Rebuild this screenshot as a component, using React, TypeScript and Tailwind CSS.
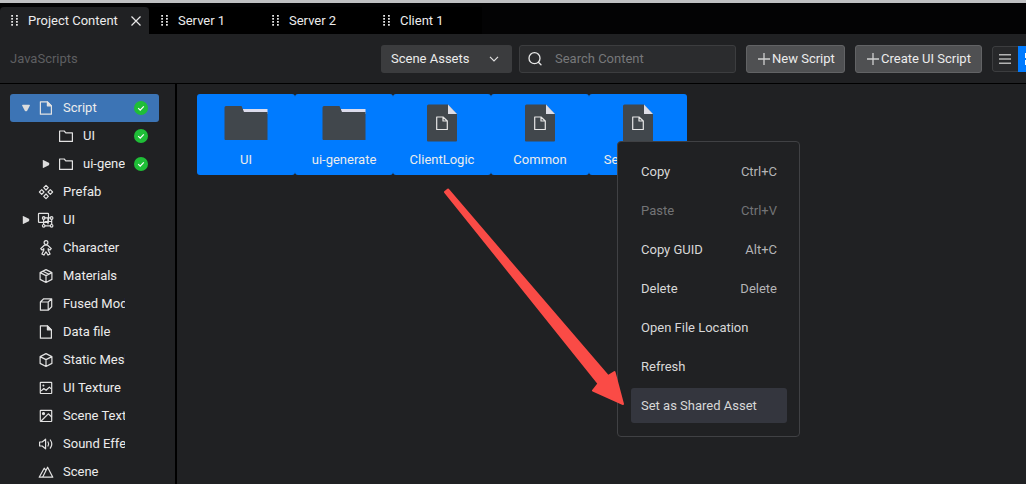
import type { ReactNode } from "react";

function Grip() {
  return (
    <svg width="8" height="11" viewBox="0 0 8 11" fill="#e8e8e8" className="shrink-0" aria-hidden="true">
      {[0, 3, 6, 9].map((y) => (
        <g key={y}>
          <rect x="0.2" y={y} width="1.8" height="1.7" />
          <rect x="5" y={y} width="1.8" height="1.7" />
        </g>
      ))}
    </svg>
  );
}

function Stroke({ children, size = 14 }: { children: ReactNode; size?: number }) {
  return (
    <svg
      width={size}
      height={size}
      viewBox="0 0 14 14"
      fill="none"
      stroke="currentColor"
      strokeWidth="1.2"
      strokeLinejoin="round"
      strokeLinecap="round"
      className="shrink-0 overflow-visible"
      aria-hidden="true"
    >
      {children}
    </svg>
  );
}

const icons = {
  file: (
    <Stroke>
      <path d="M1.4.8h7l4 4v8.4h-11z" />
      <path d="M8.4.8v4h4z" fill="currentColor" />
    </Stroke>
  ),
  folder: (
    <Stroke>
      <path d="M.6 2h4.6l1.6 1.8h6.6v8.6H.6z" />
    </Stroke>
  ),
  prefab: (
    <Stroke>
      <path d="M7 .4 9.3 2.7 7 5 4.7 2.7zM7 9l2.3 2.3L7 13.6l-2.3-2.3zM2.7 4.7 5 7 2.7 9.3.4 7zM11.3 4.7 13.6 7l-2.3 2.3L9 7z" />
    </Stroke>
  ),
  ui: (
    <Stroke>
      <rect x="-.5" y=".3" width="10" height="9" rx=".6" />
      <path d="M5 4.8h6.8M4.6 6.5v5M12.7 6.5v5M6.2 12.8H11M9 4.8v6M6.2 8.5h6" />
      <circle cx="4.7" cy="5" r="1.3" />
      <circle cx="12.6" cy="5" r="1.3" />
      <circle cx="4.7" cy="12.8" r="1.3" />
      <circle cx="12.6" cy="12.8" r="1.3" />
    </Stroke>
  ),
  character: (
    <Stroke>
      <circle cx="7" cy="1.6" r="1.9" />
      <path d="M5.3 4.2h3.4l3.6 3.5-1.4 1.4-1.7-1.4v1.5l1.9 3.7-2 1.2L7 10.8l-2.1 3.3-2-1.2 1.9-3.7V7.7L3.1 9.1 1.7 7.7z" />
    </Stroke>
  ),
  cube: (
    <Stroke>
      <path d="M7 .6 12.9 3.6v6.8L7 13.5 1.1 10.4V3.6zM1.1 3.6 7 6.6l5.9-3M7 6.6v6.9M3.9 2.2l6 3" />
    </Stroke>
  ),
  fused: (
    <Stroke>
      <path d="M1.4 5h7.8v8.2H1.4zM1.4 5l3.3-3.2h8L9.2 5M12.7 1.8v8l-3.5 3.4" />
    </Stroke>
  ),
  mesh: (
    <Stroke>
      <path d="M7 .6 12.9 3.6v6.8L7 13.5 1.1 10.4V3.6zM1.1 3.6 7 6.6l5.9-3M7 6.6v6.9" />
    </Stroke>
  ),
  texture: (
    <Stroke>
      <rect x="1.3" y="1.3" width="11.4" height="11.2" rx=".5" />
      <path d="m2.5 9.6 2.3-2.1 2.3 1.8 3.3-3.2 1.2 1.2" />
      <circle cx="4.4" cy="4.4" r=".4" fill="currentColor" />
    </Stroke>
  ),
  sceneTexture: (
    <Stroke>
      <rect x="1.3" y="1.3" width="11.4" height="11.2" rx=".5" />
      <path d="M2.6 11.5 9.3 4.8l3.2 3" />
      <circle cx="4.5" cy="4.6" r="1" fill="currentColor" />
    </Stroke>
  ),
  sound: (
    <Stroke>
      <path d="M.6 5h2.6l3.4-2.8v9.6L3.2 9H.6zM9 5q1.3 2 0 4M11.3 3q3 4 0 8.2" />
    </Stroke>
  ),
  scene: (
    <Stroke>
      <path d="M3.6 12.2 8.6 2.2l5.2 10zM3.300 12.2H.2L5.2 3.2l1.3 1.6" />
    </Stroke>
  ),
};

type TreeRow = {
  label: string;
  icon: keyof typeof icons;
  nested?: boolean;
  arrow?: "open" | "closed";
  checked?: boolean;
  selected?: boolean;
};

const tree: TreeRow[] = [
  { label: "Script", icon: "file", arrow: "open", checked: true, selected: true },
  { label: "UI", icon: "folder", nested: true, checked: true },
  { label: "ui-generate", icon: "folder", nested: true, arrow: "closed", checked: true },
  { label: "Prefab", icon: "prefab" },
  { label: "UI", icon: "ui", arrow: "closed" },
  { label: "Character", icon: "character" },
  { label: "Materials", icon: "cube" },
  { label: "Fused Model", icon: "fused" },
  { label: "Data file", icon: "file" },
  { label: "Static Mesh", icon: "mesh" },
  { label: "UI Texture", icon: "texture" },
  { label: "Scene Texture", icon: "sceneTexture" },
  { label: "Sound Effect", icon: "sound" },
  { label: "Scene", icon: "scene" },
];

function TreeItem({ row }: { row: TreeRow }) {
  return (
    <li>
      <button
        type="button"
        className={`flex h-7 w-full items-center rounded-[3px] pr-[11px] text-left ${row.selected ? "bg-[#3c74b5]" : ""} ${row.nested ? "pl-8" : "pl-3"}`}
      >
        <span className="flex w-[17px] shrink-0 text-[#dcdcdc]">
          {row.arrow && (
            <svg width="8" height="8" viewBox="0 0 8 8" fill="currentColor" aria-hidden="true">
              <path d={row.arrow === "open" ? "M0 1.2Q0 .8.6.8h6.8q.6 0 .6.4L5.2 6.8q-.3.4-.7.4h-1q-.4 0-.7-.4z" : "M1.200 0q-.4 0-.4.6v6.800q0 .6.4.6L6.800 5.200q.4-.3.4-.7v-1q0-.4-.4-.7z"} />
            </svg>
          )}
        </span>
        <span className="text-[#e2e2e2]">{icons[row.icon]}</span>
        <span className="ml-[10px] flex-1 overflow-hidden whitespace-nowrap">{row.label}</span>
        <span className="ml-[9px] flex w-[14px] shrink-0">
          {row.checked && (
            <svg width="14" height="14" viewBox="0 0 14 14" aria-hidden="true">
              <circle cx="7" cy="7" r="7" fill="#1fbe37" />
              <path d="m4.2 7.1 2 2 3.6-3.7" fill="none" stroke="#fff" strokeWidth="1.2" />
            </svg>
          )}
        </span>
      </button>
    </li>
  );
}

function FolderArt() {
  return (
    <svg width="44" height="36" viewBox="0 0 44 36" aria-hidden="true">
      <path d="M19 4h24.500v5H19z" fill="#dcdcec" />
      <path d="M2 1h15.500l2.500 6h23.500v28H1.500q-1 0-1-1V2.500Q.5 1 2 1z" fill="#41474c" />
    </svg>
  );
}

function FileArt() {
  return (
    <svg width="30" height="38" viewBox="0 0 30 38" aria-hidden="true">
      <path d="M1.500.5H21l9 9.500v26.500q0 1-1 1H1q-1 0-1-1V2Q0 .5 1.500.5z" fill="#41474c" />
      <path d="M21 0h9v10z" fill="#007bff" />
      <path d="M21 .5 30 10h-9z" fill="#dddde6" />
      <path d="M9.700 13h6.300l4.300 4v8.500H9.700zM16 13v4h4.300" fill="none" stroke="#e6e6e6" strokeWidth="1.200" strokeLinejoin="round" />
    </svg>
  );
}

const assets = [
  { name: "UI", folder: true },
  { name: "ui-generate", folder: true },
  { name: "ClientLogic", folder: false },
  { name: "Common", folder: false },
  { name: "ServerLogic", folder: false },
];

const menu = [
  { label: "Copy", keys: "Ctrl+C" },
  { label: "Paste", keys: "Ctrl+V", disabled: true },
  { label: "Copy GUID", keys: "Alt+C" },
  { label: "Delete", keys: "Delete" },
  { label: "Open File Location" },
  { label: "Refresh" },
  { label: "Set as Shared Asset", active: true },
];

function Plus() {
  return (
    <svg width="12" height="12" viewBox="0 0 12 12" stroke="#d0d0d0" strokeWidth="1.300" className="shrink-0" aria-hidden="true">
      <path d="M6 0v12M0 6h12" />
    </svg>
  );
}

export default function App() {
  return (
    <div className="flex h-screen flex-col overflow-hidden bg-[#202123] font-['Roboto',sans-serif] text-[13px] leading-4 text-[#ececec]">
      <div className="h-[3px] shrink-0 bg-[#bfc0c2]" />
      <nav className="flex h-[31px] shrink-0 bg-[#030304] pt-1">
        <div className="flex w-[149px] items-center rounded-t-[4px] bg-[#202123] pr-2 pl-[11px]">
          <button type="button" className="flex flex-1 items-center gap-[9px] whitespace-nowrap">
            <Grip />
            Project Content
          </button>
          <button type="button" aria-label="Close tab">
            <svg width="10" height="10" viewBox="0 0 10 10" stroke="#e8e8e8" strokeWidth="1.200" aria-hidden="true">
              <path d="m.5.5 9 9M9.500.5l-9 9" />
            </svg>
          </button>
        </div>
        {["Server 1", "Server 2", "Client 1"].map((t) => (
          <button key={t} type="button" className="flex w-[111px] items-center gap-[9px] bg-black pl-3">
            <Grip />
            {t}
          </button>
        ))}
      </nav>

      <header className="flex h-[50px] shrink-0 items-center border-b border-black pl-[10px]">
        <span className="flex-1 text-[#5e5f61]">JavaScripts</span>
        <div className="relative mr-[7px] w-[131px] shrink-0">
          <select
            aria-label="Asset source"
            className="h-7 w-full appearance-none rounded-[3px] bg-[#3b3c3e] pr-8 pl-[10px] outline-none"
          >
            <option>Scene Assets</option>
          </select>
          <svg width="10" height="6" viewBox="0 0 10 6" fill="none" stroke="#e0e0e0" strokeWidth="1.200" className="pointer-events-none absolute top-[11px] right-[13px]" aria-hidden="true">
            <path d="m1 .8 4 4 4-4" />
          </svg>
        </div>
        <label className="mr-[10px] flex h-7 w-[217px] shrink-0 items-center gap-[13px] rounded-[3px] border border-[#3c3d3f] bg-[#2b2c2e] pl-2">
          <svg width="14" height="14" viewBox="0 0 14 14" fill="none" stroke="#e8e8e8" strokeWidth="1.300" strokeLinecap="round" className="shrink-0" aria-hidden="true">
            <circle cx="6.500" cy="6.200" r="5.500" />
            <path d="m10.400 10.200 2.600 2.600" />
          </svg>
          <input type="text" aria-label="Search Content" placeholder="Search Content" className="w-full min-w-0 bg-transparent outline-none placeholder:text-[#77787a]" />
        </label>
        <button type="button" className="mr-[10px] flex h-7 w-[99px] shrink-0 items-center gap-[2px] rounded-[3px] border border-[#626365] bg-[#4f5052] pl-[11px] whitespace-nowrap">
          <Plus />
          New Script
        </button>
        <button type="button" className="mr-[10px] flex h-7 w-[127px] shrink-0 items-center gap-[2px] rounded-[3px] border border-[#626365] bg-[#4f5052] pl-[11px] whitespace-nowrap">
          <Plus />
          Create UI Script
        </button>
        <div className="flex h-[26px] w-[34px] shrink-0 overflow-hidden rounded-l-[3px]">
          <button type="button" aria-label="List view" className="flex w-[26px] shrink-0 items-center rounded-l-[3px] border border-r-0 border-[#3c3d3f] bg-[#27282a] pl-[6px]">
            <svg width="12" height="10" viewBox="0 0 12 10" fill="#b4b4b4" aria-hidden="true">
              <path d="M0 0h12v1.500H0zM0 4.250h12v1.500H0zM0 8.500h12V10H0z" />
            </svg>
          </button>
          <button type="button" aria-label="Grid view" className="flex w-[26px] shrink-0 items-center bg-[#007bff] pl-[7px]">
            <svg width="12" height="12" viewBox="0 0 12 12" fill="#ffffff" aria-hidden="true">
              <path d="M0 0h5v5H0zM7 0h5v5H7zM0 7h5v5H0zM7 7h5v5H7z" />
            </svg>
          </button>
        </div>
      </header>

      <div className="flex min-h-0 flex-1">
        <aside className="w-[177px] shrink-0 overflow-hidden border-r-2 border-black pt-[10px] pr-4 pl-[10px]">
          <ul>
            {tree.map((row, i) => (
              <TreeItem key={i} row={row} />
            ))}
          </ul>
        </aside>
        <main className="relative min-w-0 flex-1 pt-[10px] pl-5">
          <div className="flex flex-wrap">
            {assets.map((a) => (
              <button key={a.name} type="button" className="flex h-[81px] w-[98px] flex-col items-center rounded-[3px] bg-[#007bff] pt-[10px]">
                <span className="flex h-[38px] items-center">{a.folder ? <FolderArt /> : <FileArt />}</span>
                <span className="mt-[10px]">{a.name}</span>
              </button>
            ))}
          </div>

          <div role="menu" className="absolute top-[57px] left-[440px] flex w-[183px] flex-col gap-1 rounded-[4px] border border-[#404144] bg-[#202123] pt-3 pr-3 pb-[13px] pl-[13px]">
            {menu.map((m) => (
              <button
                key={m.label}
                type="button"
                role="menuitem"
                disabled={m.disabled}
                className={`flex h-[35px] items-center justify-between rounded-[3px] px-[10px] whitespace-nowrap ${m.active ? "bg-[#34363e]" : ""} ${m.disabled ? "text-[#737476]" : "text-[#d8d8d8]"}`}
              >
                {m.label}
                {m.keys && <span className={m.disabled ? "text-[#737476]" : "text-[#b4b4b6]"}>{m.keys}</span>}
              </button>
            ))}
          </div>

          <svg width="184" height="222" viewBox="443 186 184 222" className="pointer-events-none absolute top-[102px] left-[266px]" aria-hidden="true">
            <path d="M445 192 448 189.500 608 376 614.500 372 623 404 593 390.500 598.500 383.500z" fill="#fa4b46" stroke="#fa4b46" strokeWidth="2" strokeLinejoin="round" />
          </svg>
        </main>
      </div>
    </div>
  );
}
